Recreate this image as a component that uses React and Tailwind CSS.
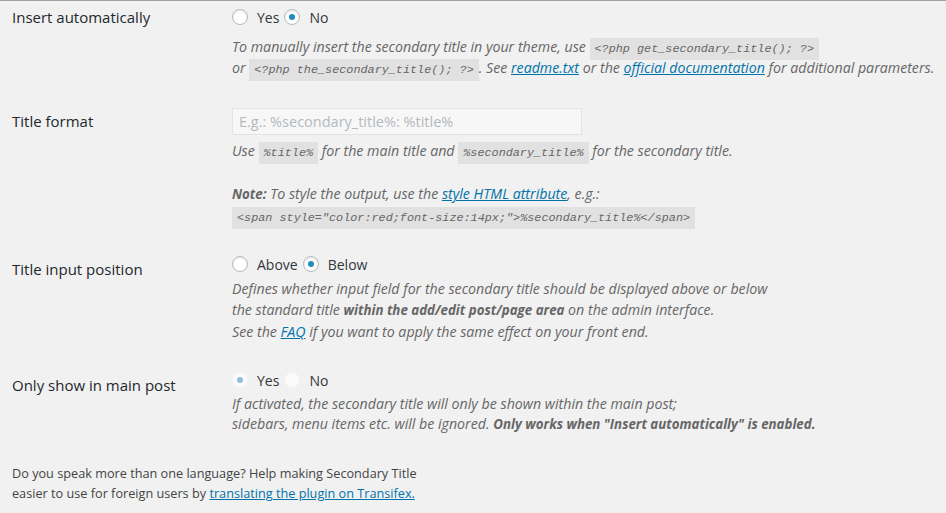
import React from 'react';

const font = { fontFamily: '"Open Sans", "Liberation Sans", sans-serif' };

const Radio = ({ checked, disabled }) => {
  const ring = disabled
    ? 'border-[#f4f4f4] bg-[#fbfbfb]'
    : 'border-[#b4b9be] bg-white shadow-[inset_0_1px_2px_rgba(0,0,0,0.1)]';
  const dot = disabled ? 'bg-[#8fbbdc]' : 'bg-[#1e8cbe]';
  return (
    <span className={`inline-flex h-4 w-4 shrink-0 items-center justify-center rounded-full border ${ring}`}>
      {checked && <span className={`h-[6px] w-[6px] rounded-full ${dot}`} />}
    </span>
  );
};

const RadioGroup = ({ options, value, disabled }) => (
  <div className="flex h-5 items-center text-[14px] text-[#32373c]">
    {options.map((opt, i) => (
      <label key={opt} className={`flex items-center ${i > 0 ? 'ml-[5px]' : ''}`}>
        <Radio checked={opt === value} disabled={disabled} />
        <span className="ml-[9px]">{opt}</span>
      </label>
    ))}
  </div>
);

const Code = ({ children }) => (
  <code
    className="bg-[#e1e1e1] px-[5px] py-[4px] text-[11.8px] italic leading-none text-[#666]"
    style={{ fontFamily: '"Liberation Mono", "DejaVu Sans Mono", monospace' }}
  >
    {children}
  </code>
);

const A = ({ children }) => (
  <a href="#" className="text-[#0073aa] underline">{children}</a>
);

const B = ({ children }) => <b className="text-[13.3px] font-bold">{children}</b>;

const Label = ({ children, pt }) => (
  <div className={`w-[220px] shrink-0 text-[15px] leading-5 text-[#23282d] ${pt}`}>{children}</div>
);

const desc = 'whitespace-nowrap text-[14.2px] italic text-[#666]';

export default function App() {
  return (
    <div className="min-h-[513px] w-[946px] border-t border-[#a0a0a0] bg-[#f1f1f1] pl-3" style={font}>
      {/* Insert automatically */}
      <div className="flex pt-[6px]">
        <Label pt="pt-0">Insert automatically</Label>
        <div>
          <RadioGroup options={['Yes', 'No']} value="No" />
          <p className={`mt-[9px] leading-[21px] ${desc}`}>
            To manually insert the secondary title in your theme, use <Code>&lt;?php get_secondary_title(); ?&gt;</Code>
            <br />
            or <Code>&lt;?php the_secondary_title(); ?&gt;</Code>. See <A>readme.txt</A> or the <A>official documentation</A> for additional parameters.
          </p>
        </div>
      </div>

      {/* Title format */}
      <div className="mt-[30px] flex">
        <Label pt="pt-[3px]">Title format</Label>
        <div>
          <input
            type="text"
            placeholder="E.g.: %secondary_title%: %title%"
            className="block h-[27px] w-[350px] border border-[#e3e3e3] bg-[#f7f7f7] px-[6px] text-[14.5px] text-[#32373c] placeholder:text-[#b4b9be] focus:outline-none"
            style={font}
          />
          <p className={`mt-[5px] leading-[21px] ${desc}`}>
            Use <Code>%title%</Code> for the main title and <Code>%secondary_title%</Code> for the secondary title.
          </p>
          <p className={`mt-[22px] leading-[22px] ${desc}`}>
            <B>Note:</B> To style the output, use the <A>style HTML attribute</A>, e.g.:
            <br />
            <Code>&lt;span style="color:red;font-size:14px;"&gt;%secondary_title%&lt;/span&gt;</Code>
          </p>
        </div>
      </div>

      {/* Title input position */}
      <div className="mt-[27px] flex">
        <Label pt="pt-[5px]">Title input position</Label>
        <div>
          <RadioGroup options={['Above', 'Below']} value="Below" />
          <p className={`mt-[4px] leading-[21px] ${desc}`}>
            Defines whether input field for the secondary title should be displayed above or below
            <br />
            the standard title <B>within the add/edit post/page area</B> on the admin interface.
            <br />
            See the <A>FAQ</A> if you want to apply the same effect on your front end.
          </p>
        </div>
      </div>

      {/* Only show in main post */}
      <div className="mt-[28px] flex">
        <Label pt="pt-[5px]">Only show in main post</Label>
        <div>
          <RadioGroup options={['Yes', 'No']} value="Yes" disabled />
          <p className={`mt-[4px] leading-5 ${desc}`}>
            If activated, the secondary title will only be shown within the main post;
            <br />
            sidebars, menu items etc. will be ignored. <B>Only works when "Insert automatically" is enabled.</B>
          </p>
        </div>
      </div>

      <p className="mt-[29px] pb-[10px] text-[12.7px] leading-5 text-[#444]">
        Do you speak more than one language? Help making Secondary Title
        <br />
        easier to use for foreign users by <A>translating the plugin on Transifex.</A>
      </p>
    </div>
  );
}
